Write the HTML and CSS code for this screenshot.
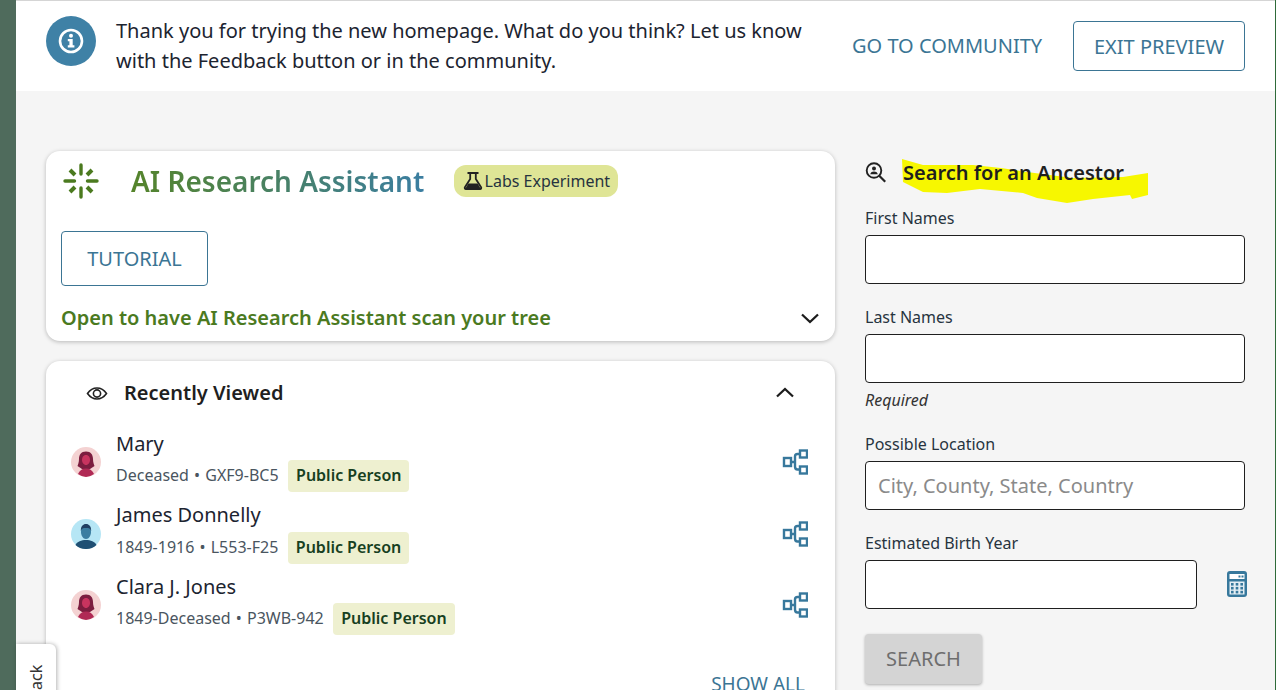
FILE: index.html
```html
<!DOCTYPE html>
<html lang="en">
<head>
<meta charset="utf-8">
<title>Home</title>
<link rel="stylesheet" href="styles.css">
</head>
<body>
<div class="strip"></div>
<div class="page">
  <header class="banner">
    <div class="info-disc">
      <svg width="26" height="26" viewBox="0 0 26 26"><circle cx="13" cy="13" r="11" fill="none" stroke="#fff" stroke-width="2.6"/><circle cx="13" cy="7.800" r="2" fill="#fff"/><path d="M9.800 11h4.900v6.300h1.700v2.200H9.800v-2.200h1.600v-4.100H9.800z" fill="#fff"/></svg>
    </div>
    <p class="banner-text">Thank you for trying the new homepage. What do you think? Let us know with the Feedback button or in the community.</p>
    <a class="link-btn">GO TO COMMUNITY</a>
    <a class="outline-btn exit">EXIT PREVIEW</a>
  </header>
  <main class="content">
    <section class="left">
      <div class="card ai-card">
        <div class="ai-head">
          <svg class="ai-icon" width="36" height="36" viewBox="0 0 36 36" stroke="#4b7a1f"><path stroke-width="3.400" stroke-linecap="round" d="M18 2V11M18 25V34M2 18H11.500M24.500 18H34"/><path stroke-width="4" d="M7 7L12 12M29 7L24 12M7 29L12 24M29 29L24 24"/></svg>
          <h1 class="ai-title">AI Research Assistant</h1>
          <span class="labs">
            <svg width="20" height="20" viewBox="0 0 20 20" fill="none" stroke="#222" stroke-width="1.800"><path d="M4.500 2h11M7.200 2.500v5.500L1.900 16.300a1.100 1.100 0 0 0 1 1.700h14.200a1.100 1.100 0 0 0 1-1.700L12.800 8V2.500"/><path d="M5.400 12.500h9.200l2.800 4.800H2.600z" fill="#222" stroke="none"/></svg>
            Labs Experiment
          </span>
        </div>
        <a class="outline-btn tutorial">TUTORIAL</a>
        <div class="ai-foot">
          <span class="ai-open">Open to have AI Research Assistant scan your tree</span>
          <svg width="20" height="20" viewBox="0 0 20 20" fill="none" stroke="#1c1c1c" stroke-width="2.300"><path d="M2 6.500l8 7.500 8-7.500"/></svg>
        </div>
      </div>
      <div class="card recent">
        <div class="recent-head">
          <svg width="22" height="22" viewBox="0 0 22 22" fill="none" stroke="#222" stroke-width="1.600"><path d="M1.500 11.500C4 7.800 7.200 6 11 6s7 1.800 9.500 5.500C18 15 14.800 17 11 17s-7-2-9.500-5.500z"/><circle cx="11" cy="11.500" r="3.600"/></svg>
          <h2 class="recent-title">Recently Viewed</h2>
          <svg class="caret-up" width="20" height="20" viewBox="0 0 20 20" fill="none" stroke="#1c1c1c" stroke-width="2.300"><path d="M2 13.500l8-7.500 8 7.500"/></svg>
        </div>
        <ul class="people">
          <li class="person">
            <svg class="avatar" width="30" height="30" viewBox="0 0 30 30"><circle cx="15" cy="15" r="15" fill="#f4d2d2"/><path d="M15 4.500c-5 0-7 3.500-7 7.500 0 3.500-1 5.500-1.500 7l4.500 3h8l4.500-3c-.5-1.500-1.500-3.500-1.500-7 0-4-2-7.500-7-7.500z" fill="#7c1d3f"/><path d="M15 8c-2.800 0-4 2.500-4 5 0 2.500 1.800 5 4 5s4-2.500 4-5c0-2.500-1.200-5-4-5z" fill="#c8345f"/><path d="M7 27c1.500-3.500 4-5.500 8-5.500s6.500 2 8 5.500a15 15 0 0 1-8 3 15 15 0 0 1-8-3z" fill="#b02a55"/></svg>
            <div class="person-text">
              <div class="person-name">Mary</div>
              <div class="person-meta"><span class="meta-text">Deceased • GXF9-BC5</span><span class="public">Public Person</span></div>
            </div>
            <svg class="tree" width="26" height="26" viewBox="0 0 26 26" fill="none" stroke="#37789c" stroke-width="2.400"><rect x="2" y="9" width="7" height="8"/><rect x="18" y="1.500" width="7" height="7"/><rect x="18" y="17.500" width="7" height="7"/><path d="M9 13h4M18 5h-2.500q-2.500 0-2.500 2.500v10q0 3 2.500 3H18"/></svg>
          </li>
          <li class="person">
            <svg class="avatar" width="30" height="30" viewBox="0 0 30 30"><circle cx="15" cy="15" r="15" fill="#b6e6f5"/><path d="M10 13c0-5 2-7.500 5-7.500s5 2.500 5 7.500c0 3.500-2 7-5 7s-5-3.500-5-7z" fill="#3b7ea1"/><path d="M9.800 12c0-5 2.200-7 5.200-7s5.200 2 5.200 7c-1-2.500-2-3-5.200-3s-4.200.5-5.200 3z" fill="#1f3f63"/><path d="M4.500 26c1.500-3.500 6-5 10.500-5s9 1.500 10.500 5A15 15 0 0 1 15 30a15 15 0 0 1-10.500-4z" fill="#1f4f73"/></svg>
            <div class="person-text">
              <div class="person-name">James Donnelly</div>
              <div class="person-meta"><span class="meta-text">1849-1916 • L553-F25</span><span class="public">Public Person</span></div>
            </div>
            <svg class="tree" width="26" height="26" viewBox="0 0 26 26" fill="none" stroke="#37789c" stroke-width="2.400"><rect x="2" y="9" width="7" height="8"/><rect x="18" y="1.500" width="7" height="7"/><rect x="18" y="17.500" width="7" height="7"/><path d="M9 13h4M18 5h-2.500q-2.500 0-2.500 2.500v10q0 3 2.500 3H18"/></svg>
          </li>
          <li class="person">
            <svg class="avatar" width="30" height="30" viewBox="0 0 30 30"><circle cx="15" cy="15" r="15" fill="#f4d2d2"/><path d="M15 4.500c-5 0-7 3.500-7 7.500 0 3.500-1 5.500-1.500 7l4.500 3h8l4.500-3c-.5-1.500-1.500-3.500-1.500-7 0-4-2-7.500-7-7.500z" fill="#7c1d3f"/><path d="M15 8c-2.800 0-4 2.500-4 5 0 2.500 1.800 5 4 5s4-2.500 4-5c0-2.500-1.200-5-4-5z" fill="#c8345f"/><path d="M7 27c1.500-3.500 4-5.500 8-5.500s6.500 2 8 5.500a15 15 0 0 1-8 3 15 15 0 0 1-8-3z" fill="#b02a55"/></svg>
            <div class="person-text">
              <div class="person-name">Clara J. Jones</div>
              <div class="person-meta"><span class="meta-text">1849-Deceased • P3WB-942</span><span class="public">Public Person</span></div>
            </div>
            <svg class="tree" width="26" height="26" viewBox="0 0 26 26" fill="none" stroke="#37789c" stroke-width="2.400"><rect x="2" y="9" width="7" height="8"/><rect x="18" y="1.500" width="7" height="7"/><rect x="18" y="17.500" width="7" height="7"/><path d="M9 13h4M18 5h-2.500q-2.500 0-2.500 2.500v10q0 3 2.500 3H18"/></svg>
          </li>
        </ul>
        <a class="show-all">SHOW ALL</a>
      </div>
    </section>
    <aside class="right">
      <div class="search-head">
        <svg width="22" height="22" viewBox="0 0 22 22" fill="none" stroke="#222" stroke-width="1.900"><circle cx="9" cy="9.500" r="7.300"/><path d="M14.200 14.700l6 6" stroke-width="2.200"/><circle cx="9" cy="7.600" r="2" fill="#222" stroke="none"/><path d="M5.200 13.300c.5-2 2-2.700 3.800-2.700s3.300.7 3.800 2.700z" fill="#222" stroke="none"/></svg>
        <h2 class="search-title">Search for an Ancestor</h2>
      </div>
      <label class="field-label">First Names</label>
      <div class="input"></div>
      <label class="field-label">Last Names</label>
      <div class="input"></div>
      <div class="required">Required</div>
      <label class="field-label">Possible Location</label>
      <div class="input placeholder">City, County, State, Country</div>
      <label class="field-label">Estimated Birth Year</label>
      <div class="year-row">
        <div class="input year"></div>
        <svg class="calc" width="20" height="26" viewBox="0 0 20 26"><rect x="0" y="0" width="20" height="26" rx="3" fill="#37789c"/><rect x="2.500" y="3" width="15" height="5" fill="#fff"/><rect x="11.500" y="4.500" width="2" height="2" fill="#37789c"/><rect x="14.500" y="4.500" width="2" height="2" fill="#37789c"/><rect x="2.500" y="10.500" width="15" height="13" fill="#e4eef4"/><g fill="#37789c"><rect x="4" y="12" width="2.600" height="2.600"/><rect x="8.700" y="12" width="2.600" height="2.600"/><rect x="13.400" y="12" width="2.600" height="2.600"/><rect x="4" y="15.900" width="2.600" height="2.600"/><rect x="8.700" y="15.900" width="2.600" height="2.600"/><rect x="13.400" y="15.900" width="2.600" height="2.600"/><rect x="4" y="19.800" width="2.600" height="2.600"/><rect x="8.700" y="19.800" width="2.600" height="2.600"/><rect x="13.400" y="19.800" width="2.600" height="2.600"/></g></svg>
      </div>
      <a class="search-btn">SEARCH</a>
    </aside>
  </main>
</div>
<svg class="scribble" width="250" height="46" viewBox="0 0 250 46"><path d="M1 1L8 3 22 7 72 7 100 10 126 14 172 20 222 19 247 15 247 37 231 41 229 37 192 41 166 45 136 40 122 35 79 31 46 35 22 34 2 24z" fill="#f7f700"/></svg>
<div class="feedback"><span class="feedback-text">Feedback</span></div>
</body>
</html>
```

FILE: styles.css
```css
* { box-sizing: border-box; }
html, body { margin: 0; height: 690px; overflow: hidden; }
body {
  font-family: "Noto Sans", sans-serif;
  color: #1f1f1f;
  background: #f5f5f5;
  display: flex;
  position: relative;
  border-right: 1px solid #2f6b3a;
}
.strip { width: 16px; flex: none; background: #4f6b5c; }
.page { flex: 1; min-width: 0; display: flex; flex-direction: column; border-top: 1px solid #d5d5d5; }
.banner {
  height: 90px;
  background: #fff;
  display: flex;
  align-items: center;
  padding: 0 30px;
  flex: none;
}
.info-disc {
  width: 50px; height: 50px; border-radius: 50%;
  background: #3f81a6;
  display: flex; align-items: center; justify-content: center;
  flex: none;
  margin-top: -10px;
}
.banner-text {
  margin: 0 0 0 20px;
  width: 710px;
  font-size: 20px;
  line-height: 30px;
  color: #1c2430;
  flex: none;
}
.link-btn { color: #3b7594; font-size: 20px; margin: 0 0 2px 26px; white-space: nowrap; }
.outline-btn {
  display: flex; align-items: center; justify-content: center;
  border: 1px solid #3b7594; border-radius: 4px;
  color: #3b7594; font-size: 20px; background: #fff;
}
.exit { width: 172px; height: 50px; margin-left: 31px; }
.content { display: flex; gap: 30px; padding: 60px 30px 0; flex: 1; min-height: 0; }
.left { width: 789px; flex: none; display: flex; flex-direction: column; gap: 20px; }
.right { width: 380px; flex: none; }
.card { background: #fff; border-radius: 14px; box-shadow: 0 1px 4px rgba(0,0,0,.25); }
.ai-card { flex: none; height: 190px; padding: 11px 15px 0; }
.ai-head { display: flex; align-items: center; height: 38px; }
.ai-icon { margin-left: 2px; flex: none; }
.ai-title {
  margin: 0 0 0 32px;
  font-size: 28px; font-weight: 600; line-height: 38px;
  background: linear-gradient(90deg, #55842a, #3b7ea1);
  -webkit-background-clip: text; background-clip: text;
  color: transparent;
  white-space: nowrap;
}
.labs {
  margin-left: 30px;
  height: 32px; width: 164px;
  background: #dfe596; border-radius: 12px;
  display: flex; align-items: center; justify-content: center; gap: 2px;
  font-size: 16px; color: #27343f; white-space: nowrap;
}
.tutorial { width: 147px; height: 55px; margin-top: 31px; }
.ai-foot {
  display: flex; align-items: center; justify-content: space-between;
  margin-top: 18px;
}
.ai-open { color: #4b7a1f; font-size: 20px; font-weight: 600; line-height: 28px; white-space: nowrap; }
.recent { flex: none; height: 400px; padding: 16px 27px 0 25px; border-radius: 14px 14px 0 0; }
.recent-head { display: flex; align-items: center; height: 32px; padding-left: 15px; }
.recent-title { margin: 0 0 0 16px; font-size: 20px; font-weight: 600; flex: 1; line-height: 32px; }
.caret-up { margin-right: 13px; }
.people { list-style: none; margin: 18.300px 0 0; padding: 0; }
.person { display: flex; align-items: center; height: 71.500px; }
.avatar { flex: none; margin-bottom: 1.200px; }
.person-text { flex: 1; margin: 0 0 4.400px 15px; }
.person-name { font-size: 20px; line-height: 28px; color: #1c2430; }
.person-meta { display: flex; align-items: center; gap: 9.500px; font-size: 16px; color: #4a5560; margin-top: 2.300px; }
.meta-text { word-spacing: 1px; margin-bottom: 2px; }
.public {
  background: #eef0d0; color: #17401f; border-radius: 4px;
  font-weight: 600; padding: 0 8px 2px; line-height: 30px;
}
.tree { flex: none; margin-bottom: 1.200px; }
.show-all { display: block; text-align: right; color: #3b7594; font-size: 19px; margin: 29.700px 3px 0 0; }
.search-head { display: flex; align-items: center; height: 30px; margin-top: 6px; }
.search-title { position: relative; z-index: 1; font-size: 20px; font-weight: 600; margin: 0 0 0 16px; white-space: nowrap; }
.field-label { display: block; font-size: 16px; line-height: 22px; color: #27343f; margin-top: 21.500px; }
.search-head + .field-label { margin-top: 20px; }
.input {
  height: 49.400px; margin-top: 6px; border: 1px solid #1f1f1f; border-radius: 4px; background: #fff;
}
.input.placeholder { display: flex; align-items: center; padding-left: 12px; font-size: 20px; color: #8a8a8a; }
.required { font-size: 16px; font-style: italic; color: #333; line-height: 22px; margin-top: 6px; }
.required + .field-label { margin-top: 21.500px; }
.year-row { display: flex; align-items: center; gap: 30px; }
.year { width: 332px; flex: none; }
.calc { flex: none; margin-top: 6px; }
.search-btn {
  display: flex; align-items: center; justify-content: center;
  width: 117px; height: 50px; margin-top: 24.600px;
  background: #d4d4d4; color: #6e6e6e; font-size: 20px; border-radius: 4px;
  box-shadow: 0 1px 3px rgba(0,0,0,.3);
}
.scribble { position: absolute; left: 901px; top: 158px; }
.feedback {
  position: absolute; left: 16px; top: 644px;
  width: 40px; height: 120px;
  background: #fff; border-radius: 0 6px 0 0;
  box-shadow: 1px 0 4px rgba(0,0,0,.3);
}
.feedback-text {
  position: absolute; left: 10px; top: 20px;
  font-size: 16px; color: #333; line-height: 20px;
  transform-origin: 0 0;
  writing-mode: vertical-rl; transform: rotate(180deg) translate(-20px, -72px);
}
```
